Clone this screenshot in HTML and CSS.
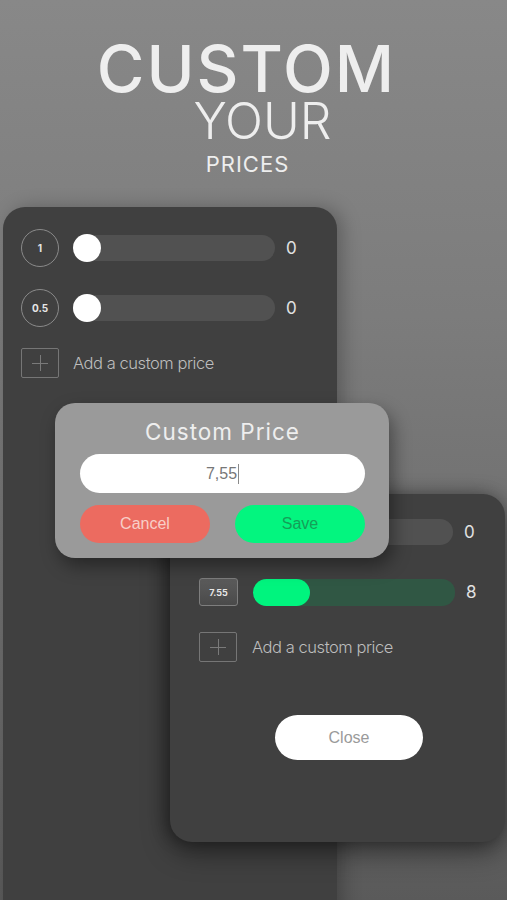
FILE: index.html
```html
<!DOCTYPE html>
<html>
<head>
<meta charset="utf-8">
<link rel="stylesheet" href="styles.css">
</head>
<body>
<div class="page">
  <header class="hero">
    <div class="h1">CUSTOM</div>
    <div class="h2">YOUR</div>
    <div class="h3">PRICES</div>
  </header>
  <div class="stage">
    <section class="panel back">
      <div class="row">
        <div class="badge circle">1</div>
        <div class="track"><div class="knob"></div></div>
        <div class="val">0</div>
      </div>
      <div class="row">
        <div class="badge circle">0.5</div>
        <div class="track"><div class="knob"></div></div>
        <div class="val">0</div>
      </div>
      <div class="row add">
        <div class="plus"><span class="ph"></span><span class="pv"></span></div>
        <div class="addtext">Add a custom price</div>
      </div>
    </section>

    <section class="panel front">
      <div class="rows">
        <div class="row">
          <div class="badge circle">1</div>
          <div class="track"><div class="knob"></div></div>
          <div class="val">0</div>
        </div>
        <div class="row">
          <div class="badge square">7.55</div>
          <div class="track green"><div class="fill" style="width:57px"></div></div>
          <div class="val">8</div>
        </div>
        <div class="row add">
          <div class="plus"><span class="ph"></span><span class="pv"></span></div>
          <div class="addtext">Add a custom price</div>
        </div>
      </div>
      <button class="close">Close</button>
    </section>

    <section class="dialog">
      <div class="dtitle">Custom Price</div>
      <div class="input"><span>7,55</span><span class="caret"></span></div>
      <div class="btns">
        <button class="btn cancel">Cancel</button>
        <button class="btn save">Save</button>
      </div>
    </section>
  </div>
</div>
</body>
</html>
```
FILE: styles.css
```css
* { box-sizing: border-box; }
html, body { margin: 0; padding: 0; }
body {
  width: 507px;
  height: 900px;
  overflow: hidden;
  font-family: Inter, "Liberation Sans", sans-serif;
  background: linear-gradient(180deg, #888888 0%, #7c7c7c 35%, #6c6c6c 70%, #5a5a5a 100%);
}
.page { width: 507px; height: 900px; overflow: hidden; }

.hero { padding-top: 40px; color: #eeeeee; text-align: center; height: 207px; }
.h1 { font-size: 65px; line-height: 58px; font-weight: 500; letter-spacing: 2px; padding-right: 14px; }
.h2 { font-size: 50px; line-height: 44px; font-weight: 300; letter-spacing: 0; padding-left: 18px; margin-top: 1px; }
.h3 { font-size: 22px; line-height: 28px; font-weight: 400; letter-spacing: 1px; margin-top: 7px; padding-right: 12px; }

.stage { position: relative; }

.panel {
  background: #404040;
  border-radius: 22px;
}
.back {
  margin-left: 3px;
  width: 334px;
  height: 740px;
  padding: 22px 0 0 18px;
  display: flex;
  flex-direction: column;
  gap: 22px;
  box-shadow: 6px 0 18px rgba(0,0,0,0.25);
}
.row { display: flex; align-items: center; height: 38px; }
.row.add { height: 30px; margin-top: -1px; }

.badge {
  width: 38px; height: 38px; flex: none;
  display: flex; align-items: center; justify-content: center;
  color: #e6e6e6; font-weight: 700; font-size: 10px;
}
.badge.circle { border: 1.5px solid #8a8a8a; border-radius: 50%; }
.badge.square {
  width: 39px; height: 28px; border-radius: 3px;
  border: 1px solid #7e7e7e;
  background: linear-gradient(180deg, #5c5c5c, #4a4a4a);
  font-size: 9px;
}
.track {
  margin-left: 14px;
  width: 202px; height: 26px;
  border-radius: 13px;
  background: #515151;
  position: relative;
}
.knob {
  width: 28px; height: 28px; border-radius: 50%;
  background: #ffffff;
  margin-top: -1px;
}
.track.green { background: #305744; height: 27px; margin-left: 15px; }
.fill { height: 27px; border-radius: 14px; background: #00f47e; }
.val { margin-left: 11px; color: #e2e2e2; font-size: 17px; font-weight: 400; }

.plus {
  width: 38px; height: 30px; flex: none;
  border: 1px solid #767676; border-radius: 2px;
  position: relative;
}
.ph, .pv { position: absolute; background: #7a7a7a; }
.ph { left: 10px; right: 10px; top: 14px; height: 1px; }
.pv { top: 6px; bottom: 6px; left: 18px; width: 1px; }
.addtext { margin-left: 14px; color: #bdbdbd; font-size: 16.5px; font-weight: 300; letter-spacing: -0.45px; }
.front .addtext { margin-left: 15px; }

.front {
  position: absolute;
  left: 170px; top: 287px;
  width: 335px; height: 348px;
  padding: 19px 0 0 29px;
  box-shadow: 0 10px 28px rgba(0,0,0,0.45), -4px 0 16px rgba(0,0,0,0.3);
}
.rows { display: flex; flex-direction: column; gap: 22px; }
.close {
  display: block;
  margin: 53px 0 0 76px;
  width: 148px; height: 45px;
  border: none; border-radius: 23px;
  background: #ffffff;
  color: #9a9a9a;
  font-family: "Liberation Sans", Inter, sans-serif;
  font-size: 16px;
}

.dialog {
  position: absolute;
  left: 55px; top: 196px;
  width: 334px; height: 155px;
  background: #9a9a9a;
  border-radius: 20px;
  padding: 14px 24px 15px 25px;
  box-shadow: 4px 8px 18px rgba(0,0,0,0.4);
}
.dtitle {
  text-align: center; color: #eeeeee;
  font-size: 22.5px; line-height: 30px; letter-spacing: 1px; font-weight: 400;
  margin-bottom: 7px;
}
.input {
  height: 39px; border-radius: 20px; background: #ffffff;
  display: flex; align-items: center; justify-content: center;
  color: #777777; font-size: 16px; font-family: "Liberation Sans", Inter, sans-serif;
}
.caret { display: inline-block; width: 1px; height: 20px; background: #8a8a8a; margin-left: 1px; }
.btns { display: flex; justify-content: space-between; margin-top: 12px; }
.btn {
  width: 130px; height: 38px; border: none; border-radius: 19px;
  font-family: "Liberation Sans", Inter, sans-serif; font-size: 16px;
}
.cancel { background: #ec6b60; color: #f8cfc8; }
.save { background: #03f57f; color: #14a058; }
```
